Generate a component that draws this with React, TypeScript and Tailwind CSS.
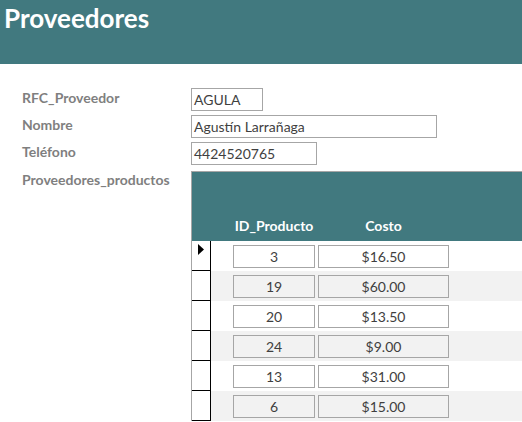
import React from "react";

const rows = [
  { id: "3", costo: "$16.50" },
  { id: "19", costo: "$60.00" },
  { id: "20", costo: "$13.50" },
  { id: "24", costo: "$9.00" },
  { id: "13", costo: "$31.00" },
  { id: "6", costo: "$15.00" },
];

const font = { fontFamily: "Lato, 'Open Sans', sans-serif" };

export default function App() {
  return (
    <div className="w-[522px] h-[422px] overflow-hidden bg-white" style={font}>
      <div className="h-[64px] bg-[#41797f] pl-[4px] pt-[3px]">
        <div className="text-[26px] font-bold text-white leading-[30px]">Proveedores</div>
      </div>
      <div className="pt-[24px]">
        <div className="flex items-center h-[23px] mb-[4px]">
          <div className="w-[191px] shrink-0 pl-[22px] pb-[4px] text-[14px] font-bold text-[#7f7f7f] leading-none">RFC_Proveedor</div>
          <div className="w-[72px] h-[23px] border border-[#a6a6a6] text-[14px] text-[#3f3f3f] pl-[2px] flex items-center leading-none">AGULA</div>
        </div>
        <div className="flex items-center h-[23px] mb-[4px]">
          <div className="w-[191px] shrink-0 pl-[22px] pb-[4px] text-[14px] font-bold text-[#7f7f7f] leading-none">Nombre</div>
          <div className="w-[246px] h-[23px] border border-[#a6a6a6] text-[14px] text-[#3f3f3f] pl-[2px] flex items-center leading-none">Agustín Larrañaga</div>
        </div>
        <div className="flex items-center h-[23px] mb-[6px]">
          <div className="w-[191px] shrink-0 pl-[22px] pb-[4px] text-[14px] font-bold text-[#7f7f7f] leading-none">Teléfono</div>
          <div className="w-[126px] h-[23px] border border-[#a6a6a6] text-[14px] text-[#3f3f3f] pl-[2px] flex items-center leading-none">4424520765</div>
        </div>
        <div className="flex items-start">
          <div className="w-[191px] shrink-0 pl-[22px] pt-[2px] text-[14px] font-bold text-[#7f7f7f] leading-none whitespace-nowrap">Proveedores_productos</div>
          <div className="flex-1 border-t border-l border-[#a6a6a6]">
            <div className="h-[69px] bg-[#41797f] flex items-end pb-[8px] text-[14px] font-bold text-white leading-none">
              <div className="w-[41px]" />
              <div className="w-[82px] text-center">ID_Producto</div>
              <div className="w-[3px]" />
              <div className="w-[131px] text-center">Costo</div>
            </div>
            {rows.map((r, i) => (
              <div key={i} className={`flex h-[30px] ${i % 2 === 1 ? "bg-[#f2f2f2]" : "bg-white"}`}>
                <div className="w-[19px] h-[30px] bg-white border-r border-b border-black flex items-start justify-center pt-[3px]">
                  {i === 0 && (
                    <svg width="7" height="11" viewBox="0 0 7 11">
                      <polygon points="0,0 6,5.5 0,11" fill="#000" />
                    </svg>
                  )}
                </div>
                <div className="w-[22px]" />
                <div
                  className={`w-[82px] h-[23px] mt-[4px] border border-[#a6a6a6] ${i % 2 === 1 ? "bg-[#f2f2f2]" : "bg-white"} text-[14px] text-[#3f3f3f] flex items-center justify-center leading-none`}
                >
                  {r.id}
                </div>
                <div className="w-[3px]" />
                <div
                  className={`w-[131px] h-[23px] mt-[4px] border border-[#a6a6a6] ${i % 2 === 1 ? "bg-[#f2f2f2]" : "bg-white"} text-[14px] text-[#3f3f3f] flex items-center justify-center leading-none`}
                >
                  {r.costo}
                </div>
              </div>
            ))}
          </div>
        </div>
      </div>
    </div>
  );
}
